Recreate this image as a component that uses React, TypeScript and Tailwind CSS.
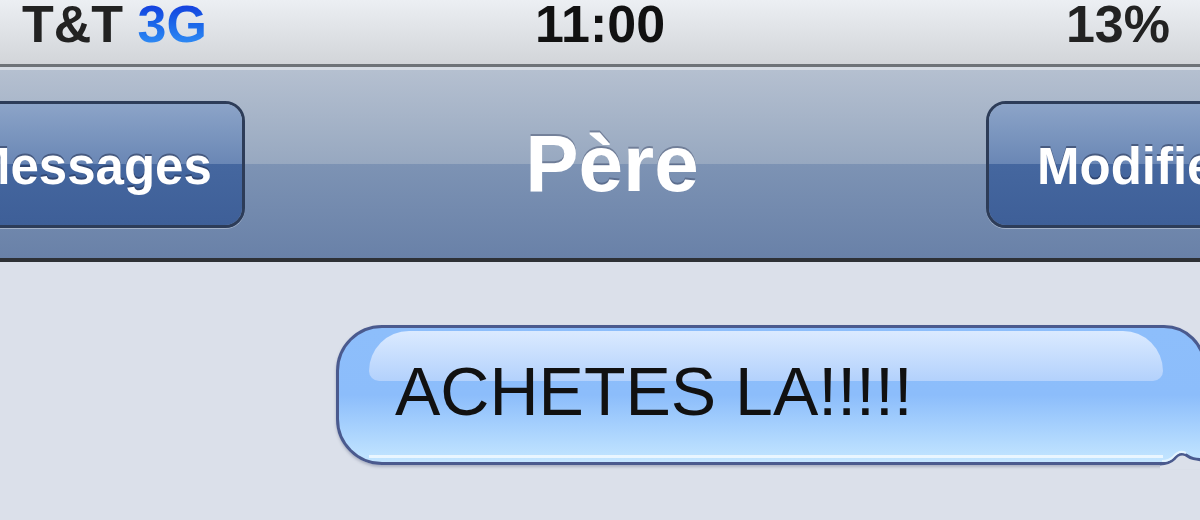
import React from "react";

export default function App() {
  return (
    <div className="w-[1200px] h-[520px] overflow-hidden flex flex-col bg-[#dbe0ea]" style={{ fontFamily: '"Liberation Sans", Arial, sans-serif' }}>
      {/* Status bar */}
      <div className="relative h-[64px] shrink-0 bg-gradient-to-b from-[#eceff3] to-[#d2d5d9] overflow-hidden">
        <div className="absolute left-[22px] top-[-2px] text-[52px] leading-none font-bold text-[#222] whitespace-nowrap">
          T&amp;T{" "}
          <span className="bg-gradient-to-b from-[#1a22d8] to-[#3a9af8] bg-clip-text text-transparent">3G</span>
        </div>
        <div className="absolute left-0 right-0 top-[-2px] text-center text-[52px] leading-none font-bold text-[#111]">11:00</div>
        <div className="absolute right-[30px] top-[-2px] text-[52px] leading-none font-bold text-[#222]">13%</div>
      </div>
      <div className="h-[3px] shrink-0 bg-[#6e7378]" />
      <div className="h-[3px] shrink-0 bg-[#d5dbe3]" />
      {/* Nav bar */}
      <div className="relative h-[188px] shrink-0 flex items-center">
        <div className="absolute inset-x-0 top-0 h-1/2 bg-gradient-to-b from-[#b5c0d0] to-[#97a8c0]" />
        <div className="absolute inset-x-0 bottom-0 h-1/2 bg-gradient-to-b from-[#7d93b4] to-[#6981a8]" />
        {/* back button */}
        <div className="relative ml-[-60px] w-[305px] h-[127px] rounded-[20px] border-[3px] border-[#2d3c58] shadow-[0_1px_0_rgba(255,255,255,0.35)] overflow-hidden flex items-center">
          <div className="absolute inset-x-0 top-0 h-1/2 bg-gradient-to-b from-[#8ca4c8] to-[#6a87b5]" />
          <div className="absolute inset-x-0 bottom-0 h-1/2 bg-gradient-to-b from-[#45679f] to-[#3e5f98]" />
          <span className="relative ml-[25px] mt-[4px] text-[51px] leading-none font-bold text-white whitespace-nowrap [text-shadow:0_-2px_0_rgba(30,40,70,0.5)]">Messages</span>
        </div>
        <div className="absolute left-0 right-0 text-center pl-[24px] text-[80px] leading-none font-bold text-white [text-shadow:0_-2px_0_rgba(50,60,90,0.4)]">Père</div>
        <div className="relative ml-auto mr-[-120px] w-[334px] h-[127px] rounded-[20px] border-[3px] border-[#2d3c58] shadow-[0_1px_0_rgba(255,255,255,0.35)] overflow-hidden flex items-center">
          <div className="absolute inset-x-0 top-0 h-1/2 bg-gradient-to-b from-[#8ca4c8] to-[#6a87b5]" />
          <div className="absolute inset-x-0 bottom-0 h-1/2 bg-gradient-to-b from-[#45679f] to-[#3e5f98]" />
          <span className="relative ml-[48px] mt-[4px] text-[51px] leading-none font-bold text-white whitespace-nowrap [text-shadow:0_-2px_0_rgba(30,40,70,0.5)]">Modifier</span>
        </div>
      </div>
      <div className="h-[4px] shrink-0 bg-[#2e3136]" />
      {/* Body */}
      <div className="flex-1 relative pt-[63px] pl-[336px] pr-0">
        <div className="relative mr-[-6px]">
          <div className="relative h-[140px] rounded-l-[46px] rounded-tr-[42px] rounded-br-[8px] border-[3px] border-[#4a5a8e] shadow-[0_2px_3px_rgba(80,90,120,0.35)] overflow-hidden flex items-center bg-gradient-to-b from-[#8dbefb] via-[#8cbdfb] to-[#c4e6ff]">
            <div className="absolute left-[30px] right-[40px] top-[3px] h-[50px] rounded-t-[40px] rounded-b-[10px] bg-gradient-to-b from-[#dbeaff] to-[#b3d1fc]" />
            <div className="absolute left-[30px] right-[40px] bottom-[4px] h-[3px] bg-[#eaf6ff]" />
            <span className="relative ml-[56px] mt-[-8px] text-[68px] leading-none text-[#111] whitespace-nowrap">ACHETES LA!!!!!</span>
          </div>
          <svg className="absolute left-[824px] top-[112px]" width="50" height="32" viewBox="0 0 50 32">
            <path d="M0 32 L0 27 C6 27 10 26 14 22 C18 17 22 16 26 18 C30 21 34 23 50 23 L50 32 Z" fill="#dbe0ea" />
            <path d="M0 27 C6 27 10 26 14 22 C18 17 22 16 26 18 C30 21 34 23 50 23" fill="none" stroke="#4a5a8e" strokeWidth="3" />
            <path d="M2 24 C7 24 10 23 13 20 C17 15 22 14 26 16" fill="none" stroke="#e4f4ff" strokeWidth="2" />
          </svg>
        </div>
      </div>
    </div>
  );
}
